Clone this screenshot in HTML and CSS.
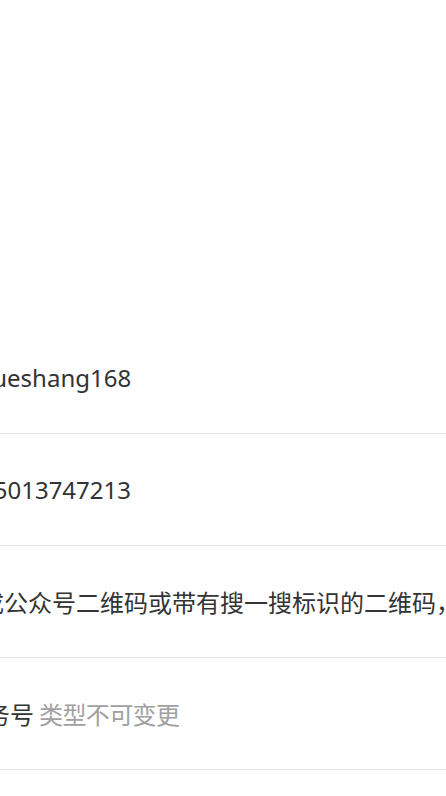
FILE: index.html
```html
<!DOCTYPE html>
<html lang="zh-CN">
<head>
    <meta charset="UTF-8">
    <meta name="viewport" content="width=device-width, initial-scale=1.0">
    <title>账号信息</title>
    <link rel="stylesheet" href="styles.css">
</head>
<body>
    <div class="page">
        <!-- header area (blank in this view) -->
        <div class="header"></div>

        <div class="form">
            <div class="form-row">
                <span class="label">微信号</span>
                <span class="value">yueshang168</span>
            </div>
            <div class="form-row">
                <span class="label">手机号</span>
                <span class="value">15013747213</span>
            </div>
            <div class="form-row">
                <span class="label">二维码</span>
                <span class="value">成公众号二维码或带有搜一搜标识的二维码，请勿上传个人二维码</span>
            </div>
            <div class="form-row">
                <span class="label">账号类型</span>
                <span class="value value-type">服务号<span class="hint">类型不可变更</span></span>
            </div>
        </div>
    </div>
</body>
</html>
```

FILE: styles.css
```css
html, body {
  margin: 0;
  padding: 0;
  background: #fff;
  overflow: hidden;
}

body {
  font-family: "Noto Sans", "Noto Sans CJK SC", sans-serif;
  color: #333;
}

.page {
  width: 446px;
  height: 796px;
  overflow: hidden;
}

/* Blank top area */
.header {
  height: 322px;
}

/* The label column sits left of the visible area */
.form {
  margin-left: -190px;
}

.form-row {
  display: flex;
  align-items: center;
  height: 111px;
  border-bottom: 1px solid #e5e5e5;
  font-size: 24px;
  white-space: nowrap;
}

.label {
  width: 150px;
  flex-shrink: 0;
  padding-left: 20px;
  color: #333;
}

.value {
  color: #333;
}

.value-type {
  margin-left: -18px;
}

.hint {
  margin-left: 5px;
  letter-spacing: -0.6px;
  color: #a0a0a0;
}
```
